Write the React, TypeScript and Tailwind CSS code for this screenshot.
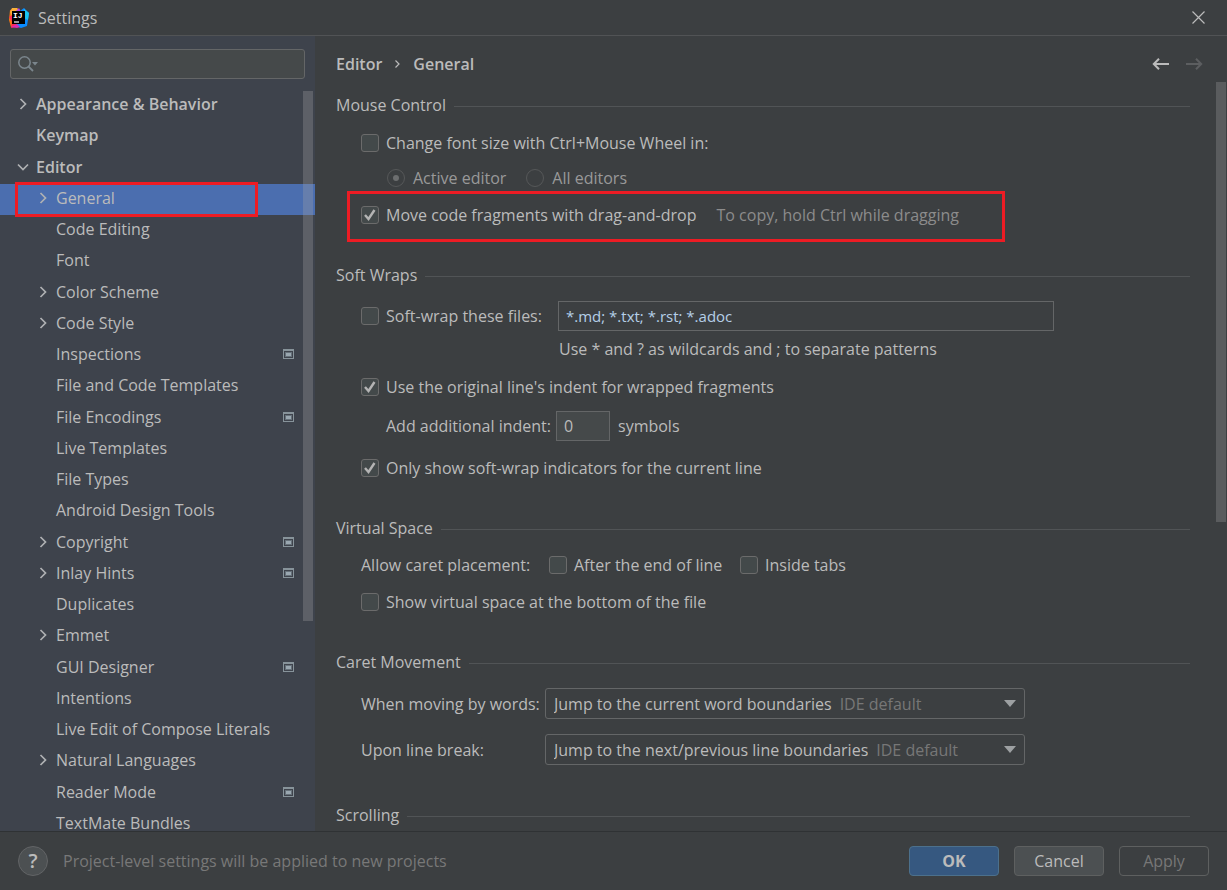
import { useState } from "react";
import type { ReactNode } from "react";
import clsx from "clsx";

type TreeItem = {
  name: string;
  level: 0 | 1;
  arrow?: "open" | "closed";
  project?: boolean;
};

const TREE: TreeItem[] = [
  { name: "Appearance & Behavior", level: 0, arrow: "closed" },
  { name: "Keymap", level: 0 },
  { name: "Editor", level: 0, arrow: "open" },
  { name: "General", level: 1, arrow: "closed" },
  { name: "Code Editing", level: 1 },
  { name: "Font", level: 1 },
  { name: "Color Scheme", level: 1, arrow: "closed" },
  { name: "Code Style", level: 1, arrow: "closed" },
  { name: "Inspections", level: 1, project: true },
  { name: "File and Code Templates", level: 1 },
  { name: "File Encodings", level: 1, project: true },
  { name: "Live Templates", level: 1 },
  { name: "File Types", level: 1 },
  { name: "Android Design Tools", level: 1 },
  { name: "Copyright", level: 1, arrow: "closed", project: true },
  { name: "Inlay Hints", level: 1, arrow: "closed", project: true },
  { name: "Duplicates", level: 1 },
  { name: "Emmet", level: 1, arrow: "closed" },
  { name: "GUI Designer", level: 1, project: true },
  { name: "Intentions", level: 1 },
  { name: "Live Edit of Compose Literals", level: 1 },
  { name: "Natural Languages", level: 1, arrow: "closed" },
  { name: "Reader Mode", level: 1, project: true },
  { name: "TextMate Bundles", level: 1 },
];

function Logo() {
  return (
    <svg width="20" height="20" viewBox="0 0 20 20" className="shrink-0">
      <path d="M1 2 8 0l4 4-6 14-4 1L0 12z" fill="#f97a12" />
      <path d="M3 0h5l3 4-8 4-2-4z" fill="#fbb03b" />
      <path d="M0 9l5-3 4 8-2 5-5 1 1-6z" fill="#fe2857" />
      <path d="M7 3 10 0l2 4-4 3z" fill="#b345f1" />
      <path d="M11 3l4-3 5 5-2 13-6 2-6-2 7-8z" fill="#0a8bff" />
      <path d="M15 1l5 4-1 7-4-2z" fill="#18c5f0" />
      <path d="M2 19l6-3 3 3-3 1z" fill="#d92bb0" />
      <path d="M3 3h13v13H3z" fill="#000" />
      <text x="4" y="10" fill="#fff" className="font-['Liberation_Mono',monospace] text-[8px] font-bold">IJ</text>
      <path d="M5 14h5" stroke="#fff" strokeWidth="1.2" />
    </svg>
  );
}

function TreeArrow({ open }: { open: boolean }) {
  return (
    <svg width="14" height="14" viewBox="0 0 14 14" fill="none" stroke="#afb1b3" strokeWidth="1.7">
      <path d={open ? "M2 4.5 7 9.5 12 4.5" : "M4.5 2 9.5 7 4.5 12"} />
    </svg>
  );
}

function ProjectIcon() {
  return (
    <svg width="11" height="10" viewBox="0 0 11 10" className="mr-[21px]">
      <path d="M0 0h11v10H0z" fill="#87939a" />
      <path d="M1 2h9v7H1z" fill="#3e434c" />
      <path d="M2 3h7v5H2z" fill="#66717a" />
      <path d="M3 4h5v3H3z" fill="#9aa7b0" />
    </svg>
  );
}

function Section({ title, className, children }: { title: string; className?: string; children?: ReactNode }) {
  return (
    <section className={className}>
      <div className="flex h-[26px] items-center gap-2">
        <h2>{title}</h2>
        <span className="mt-[2px] h-px flex-1 bg-[#515456]" />
      </div>
      <div className="pl-[25px]">{children}</div>
    </section>
  );
}

function Check({ label, checked = false, className }: { label: string; checked?: boolean; className?: string }) {
  return (
    <label className={clsx("flex h-[26px] items-center gap-[7px] whitespace-nowrap", className)}>
      <span className="grid size-[18px]">
        <input
          type="checkbox"
          defaultChecked={checked}
          className="peer col-start-1 row-start-1 size-[18px] appearance-none rounded-[3px] border border-[#6b6b6b] bg-[#43494a]"
        />
        <svg viewBox="0 0 18 18" className="pointer-events-none invisible col-start-1 row-start-1 size-[18px] peer-checked:visible">
          <path d="M4 9 7.500 13 13.5 4" fill="none" stroke="#b4b4b4" strokeWidth="2.4" />
        </svg>
      </span>
      {label}
    </label>
  );
}

function Radio({ label, checked = false }: { label: string; checked?: boolean }) {
  return (
    <label className="flex items-center gap-2 text-[#999999]">
      <span className="grid size-[18px] place-items-center">
        <input
          type="radio"
          name="wheel-scope"
          disabled
          defaultChecked={checked}
          className="peer col-start-1 row-start-1 size-[18px] appearance-none rounded-full border border-[#565859]"
        />
        <span className="invisible col-start-1 row-start-1 size-[6px] rounded-full bg-[#6c6e6f] peer-checked:visible" />
      </span>
      {label}
    </label>
  );
}

function Combo({ id, label, value, className }: { id: string; label: string; value: string; className?: string }) {
  return (
    <div className={clsx("flex items-center", className)}>
      <label htmlFor={id} className="w-[184px]">{label}</label>
      <div className="flex h-[31px] w-[480px] items-center gap-2 rounded-[3px] border border-[#646667] px-2">
        <select id={id} className="field-sizing-content appearance-none bg-transparent text-[#bbbbbb] outline-none">
          <option>{value}</option>
        </select>
        <span className="text-[#777777]">IDE default</span>
        <svg width="12" height="7" viewBox="0 0 12 7" className="ml-auto">
          <path d="M0 0h12L6 7z" fill="#9da0a2" />
        </svg>
      </div>
    </div>
  );
}

export default function App() {
  const [selected, setSelected] = useState("General");

  return (
    <div className="flex h-screen flex-col overflow-hidden bg-[#3c3f41] font-['Open_Sans',sans-serif] text-[16px] leading-[20px] text-[#bbbbbb]">
      <header className="flex h-9 shrink-0 items-center border-b border-[#515355] pl-[9px] pr-[22px]">
        <Logo />
        <h1 className="ml-[9px]">Settings</h1>
        <button aria-label="Close" className="ml-auto">
          <svg width="13" height="13" viewBox="0 0 13 13" stroke="#bbbbbb" strokeWidth="1.2">
            <path d="M.5.5l12 12M12.5.5l-12 12" />
          </svg>
        </button>
      </header>

      <div className="flex min-h-0 flex-1">
        <aside className="flex w-[315px] shrink-0 flex-col overflow-hidden bg-[#3e434c]">
          <div className="mx-[10px] mt-[13px] flex h-[30px] shrink-0 items-center rounded-[3px] border border-[#646667] bg-[#45494a] pl-[7px]">
            <svg width="22" height="16" viewBox="0 0 22 16" fill="none">
              <circle cx="6.5" cy="6.5" r="5.7" stroke="#7b868d" strokeWidth="1.5" />
              <path d="M10.5 10.5 15 15" stroke="#7b868d" strokeWidth="1.8" />
              <path d="M14 6h6l-3 3.500z" fill="#7b868d" />
            </svg>
            <input aria-label="Search settings" className="min-w-0 flex-1 bg-transparent outline-none" />
          </div>
          <div className="relative mt-[11px] min-h-0 flex-1 overflow-hidden">
            <ul className="grid h-[750px] auto-rows-fr">
              {TREE.map((item) => (
                <li key={item.name} className="relative flex">
                  <button
                    onClick={() => setSelected(item.name)}
                    className={clsx(
                      "flex flex-1 items-center pb-[3px] text-left",
                      item.level === 0 ? "pl-4 font-semibold" : "pl-9",
                      selected === item.name && "bg-[#4b6eaf]"
                    )}
                  >
                    <span className="w-5">{item.arrow && <TreeArrow open={item.arrow === "open"} />}</span>
                    <span className="flex-1">{item.name}</span>
                    {item.project && <ProjectIcon />}
                  </button>
                  {item.name === "General" && (
                    <span className="pointer-events-none absolute -inset-y-[2px] left-[15px] w-[243px] border-3 border-[#ed1c24]" />
                  )}
                </li>
              ))}
            </ul>
            <span className="absolute right-[2px] top-px h-[530px] w-[10px] bg-[#a6a6a6]/30" />
          </div>
        </aside>

        <main className="flex min-w-0 flex-1 flex-col">
          <div className="flex h-14 shrink-0 items-center pl-[21px] pr-6">
            <nav className="flex items-center font-semibold">
              <span>Editor</span>
              <svg width="5" height="8" viewBox="0 0 5 8" fill="none" stroke="#bbbbbb" strokeWidth="1.2" className="mx-[13px]">
                <path d="M.5.5 4 4 .5 7.500" />
              </svg>
              <span>General</span>
            </nav>
            <button aria-label="Back" className="ml-auto">
              <svg width="17" height="12" viewBox="0 0 17 12" fill="none" stroke="#bbbbbb" strokeWidth="2">
                <path d="M17 6H2M7 .8 1.800 6 7 11.200" />
              </svg>
            </button>
            <button aria-label="Forward" disabled className="ml-[17px]">
              <svg width="17" height="12" viewBox="0 0 17 12" fill="none" stroke="#5c5e60" strokeWidth="2">
                <path d="M0 6h15M10 .8 15.200 6 10 11.200" />
              </svg>
            </button>
          </div>

          <div className="relative min-h-0 flex-1 overflow-hidden pl-[21px] pr-[37px]">
            <Section title="Mouse Control">
              <Check label="Change font size with Ctrl+Mouse Wheel in:" className="mt-3" />
              <div className="mt-[9px] flex h-[26px] items-center gap-5 pl-[26px]">
                <Radio label="Active editor" checked />
                <Radio label="All editors" />
              </div>
              <div className="relative mt-[11px] flex h-[26px] items-center gap-5">
                <Check label="Move code fragments with drag-and-drop" checked />
                <span className="text-[#8c8c8c]">To copy, hold Ctrl while dragging</span>
                <span className="pointer-events-none absolute -left-[14px] -top-[11px] h-[51px] w-[658px] border-3 border-[#ed1c24]" />
              </div>
            </Section>

            <Section title="Soft Wraps" className="mt-[34px]">
              <div className="mt-[13px] flex items-center">
                <Check label="Soft-wrap these files:" className="w-[197px]" />
                <input
                  aria-label="Soft-wrap file patterns"
                  defaultValue="*.md; *.txt; *.rst; *.adoc"
                  className="h-[30px] w-[496px] border border-[#646667] bg-transparent px-[7px] text-[15px] text-[#b5cfe8] outline-none"
                />
              </div>
              <p className="mt-[5px] flex h-[26px] items-center pl-[198px]">Use * and ? as wildcards and ; to separate patterns</p>
              <Check label="Use the original line's indent for wrapped fragments" checked className="mt-3" />
              <div className="mt-[11px] flex items-center pl-[25px]">
                <label htmlFor="indent" className="w-[170px]">Add additional indent:</label>
                <input
                  id="indent"
                  defaultValue="0"
                  className="mr-2 h-[30px] w-[54px] border border-[#646667] bg-[#45494a] px-[7px] outline-none"
                />
                symbols
              </div>
              <Check label="Only show soft-wrap indicators for the current line" checked className="mt-[14px]" />
            </Section>

            <Section title="Virtual Space" className="mt-[34px]">
              <div className="mt-[11px] flex items-center">
                <span className="w-[188px]">Allow caret placement:</span>
                <Check label="After the end of line" className="w-[191px]" />
                <Check label="Inside tabs" />
              </div>
              <Check label="Show virtual space at the bottom of the file" className="mt-[11px]" />
            </Section>

            <Section title="Caret Movement" className="mt-[34px]">
              <Combo id="by-words" label="When moving by words:" value="Jump to the current word boundaries" className="mt-[13px]" />
              <Combo id="line-break" label="Upon line break:" value="Jump to the next/previous line boundaries" className="mt-[15px]" />
            </Section>

            <Section title="Scrolling" className="mt-[37px]" />
          </div>
        </main>

        <div className="-ml-[11px] w-[11px] shrink-0 pt-[46px]">
          <div className="h-[440px] w-[10px] bg-[#5a5c5e]" />
        </div>
      </div>

      <footer className="flex h-[59px] shrink-0 items-center border-t border-[#2f3234] pl-[18px] pr-[18px]">
        <button aria-label="Help" className="grid size-[30px] place-items-center rounded-full border border-[#626466] bg-[#4c5052] text-xl font-semibold">
          ?
        </button>
        <p className="ml-[15px] text-[#787878]">Project-level settings will be applied to new projects</p>
        <div className="ml-auto flex gap-[15px]">
          <button className="h-[30px] w-[90px] rounded-[4px] border border-[#4c708c] bg-[#365880] font-bold">OK</button>
          <button className="h-[30px] w-[90px] rounded-[4px] border border-[#5e6060] bg-[#4c5052]">Cancel</button>
          <button disabled className="h-[30px] w-[90px] rounded-[4px] border border-[#5e6060] text-[#777777]">Apply</button>
        </div>
      </footer>
    </div>
  );
}
